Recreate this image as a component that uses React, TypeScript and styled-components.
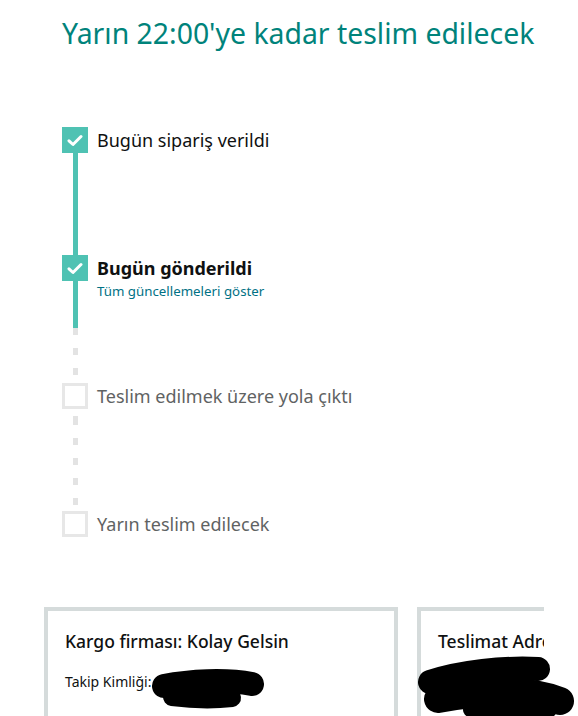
import React from "react";
import styled, { createGlobalStyle } from "styled-components";

const GlobalStyle = createGlobalStyle`
  html, body {
    margin: 0;
    padding: 0;
    background: #ffffff;
  }
  body {
    font-family: "Noto Sans", "DejaVu Sans", sans-serif;
    color: #0f1111;
    -webkit-font-smoothing: antialiased;
  }
`;

const Page = styled.div`
  position: relative;
  width: 578px;
  height: 716px;
  overflow: hidden;
`;

const Heading = styled.h1`
  margin: 0;
  padding: 14px 0 0 62px;
  font-size: 28.4px;
  line-height: 38px;
  font-weight: 400;
  color: #00837b;
  white-space: nowrap;
`;

const Timeline = styled.ol`
  list-style: none;
  margin: 75px 0 0 62px;
  padding: 0;
`;

const Step = styled.li<{ $last?: boolean }>`
  display: flex;
  align-items: flex-start;
  height: ${(p) => (p.$last ? "26px" : "128px")};
`;

const Marker = styled.div`
  display: flex;
  flex-direction: column;
  align-items: center;
  width: 26px;
  height: 100%;
  flex-shrink: 0;
`;

const Box = styled.div<{ $done?: boolean }>`
  box-sizing: border-box;
  width: 26px;
  height: 26px;
  flex-shrink: 0;
  display: flex;
  align-items: center;
  justify-content: center;
  background: ${(p) => (p.$done ? "#4fc2b3" : "#ffffff")};
  border: ${(p) => (p.$done ? "none" : "3px solid #e7e7e7")};
`;

const Track = styled.div<{ $offset: number }>`
  width: 5px;
  flex: 1;
  margin-left: 1px;
  background-image: repeating-linear-gradient(
    to bottom,
    #e3e3e3 0 7px,
    transparent 7px 20px
  );
  background-position: 0 ${(p) => p.$offset}px;
`;

const Fill = styled.div<{ $grow?: boolean }>`
  width: 5px;
  margin-left: 1px;
  flex: ${(p) => (p.$grow ? "1" : "none")};
  background: #4fc2b3;
`;

const Label = styled.div`
  margin-left: 9px;
  display: flex;
  flex-direction: column;
`;

const Title = styled.span<{ $state: "done" | "current" | "todo" }>`
  font-size: 18px;
  line-height: 26px;
  font-weight: ${(p) => (p.$state === "current" ? 700 : 400)};
  color: ${(p) => (p.$state === "todo" ? "#5f6363" : "#0f1111")};
  white-space: nowrap;
`;

const Link = styled.a`
  font-size: 13.3px;
  line-height: 20px;
  color: #007185;
  text-decoration: none;
  white-space: nowrap;
`;

const CardStrip = styled.div`
  display: flex;
  gap: 19px;
  width: 500px;
  margin: 70px 0 0 44px;
  overflow: hidden;
`;

const Card = styled.section`
  box-sizing: border-box;
  flex: 0 0 354px;
  height: 160px;
  border: 4px solid #d5dbdb;
  padding: 17px 17px 0 17px;
`;

const CardTitle = styled.h4`
  margin: 0;
  font-size: 17.5px;
  line-height: 26px;
  font-weight: 500;
  color: #0f1111;
  white-space: nowrap;
`;

const CardLine = styled.p`
  margin: 18px 0 0;
  font-size: 14px;
  line-height: 20px;
  color: #0f1111;
  white-space: nowrap;
`;

const Redaction = styled.svg`
  position: absolute;
  left: 0;
  top: 0;
  pointer-events: none;
`;

const Check = () => (
  <svg width="16" height="13" viewBox="0 0 16 13">
    <path
      d="M2 6.8 L6 10.5 L14 2.5"
      fill="none"
      stroke="#ffffff"
      strokeWidth="3"
      strokeLinecap="round"
      strokeLinejoin="round"
    />
  </svg>
);

type StepData = {
  title: string;
  state: "done" | "current" | "todo";
  fill: "full" | number;
  offset: number;
  link?: string;
};

const steps: StepData[] = [
  { title: "Bugün sipariş verildi", state: "done", fill: "full", offset: 0 },
  {
    title: "Bugün gönderildi",
    state: "current",
    fill: 47,
    offset: 0,
    link: "Tüm güncellemeleri göster",
  },
  { title: "Teslim edilmek üzere yola çıktı", state: "todo", fill: 0, offset: 9 },
  { title: "Yarın teslim edilecek", state: "todo", fill: 0, offset: 0 },
];

export default function App() {
  return (
    <>
      <GlobalStyle />
      <Page>
        <Heading>Yarın 22:00'ye kadar teslim edilecek</Heading>

        <Timeline>
          {steps.map((s, i) => {
            const last = i === steps.length - 1;
            return (
              <Step key={s.title} $last={last}>
                <Marker>
                  <Box $done={s.state !== "todo"}>
                    {s.state !== "todo" && <Check />}
                  </Box>
                  {!last && s.fill === "full" && <Fill $grow />}
                  {!last && s.fill !== "full" && (
                    <>
                      {s.fill > 0 && <Fill style={{ height: s.fill }} />}
                      <Track $offset={s.offset} />
                    </>
                  )}
                </Marker>
                <Label>
                  <Title $state={s.state}>{s.title}</Title>
                  {s.link && <Link href="#">{s.link}</Link>}
                </Label>
              </Step>
            );
          })}
        </Timeline>

        <CardStrip>
          <Card>
            <CardTitle>Kargo firması: Kolay Gelsin</CardTitle>
            <CardLine>Takip Kimliği:</CardLine>
          </Card>
          <Card>
            <CardTitle>Teslimat Adresi</CardTitle>
          </Card>
        </CardStrip>

        <Redaction width="578" height="716" viewBox="0 0 578 716">
          <g fill="none" stroke="#000000" strokeLinecap="round">
            <path d="M164 686 C190 681 225 679 252 684" strokeWidth="24" />
            <path d="M172 697 C195 700 215 700 232 698" strokeWidth="18" />
            <path d="M430 682 C460 672 505 667 538 669" strokeWidth="24" />
            <path d="M438 699 C480 691 525 687 560 701" strokeWidth="28" />
            <path d="M470 710 C500 712 530 712 550 710" strokeWidth="14" />
          </g>
        </Redaction>
      </Page>
    </>
  );
}
